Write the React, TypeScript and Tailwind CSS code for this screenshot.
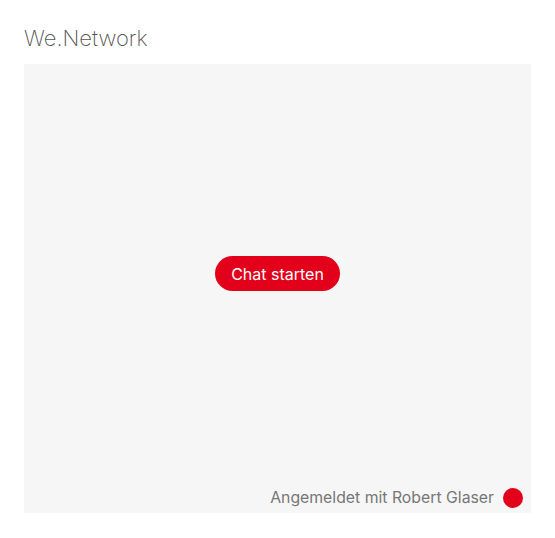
export default function App() {
  return (
    <div className="w-[555px] h-[538px] bg-white px-6 pt-[23px] pb-[25px] flex flex-col font-['Inter',sans-serif]">
      <h1 className="text-[22px] leading-[30px] font-extralight text-[#555555] mb-[11px]">We.Network</h1>
      <div className="flex-1 bg-[#f6f6f6] flex flex-col">
        <div className="flex-1 flex items-center justify-center">
          <button className="h-[35px] px-4 rounded-full bg-[#e2001a] text-white text-base">
            Chat starten
          </button>
        </div>
        <div className="h-[30px] flex items-center justify-end gap-[9px] pr-2">
          <span className="text-[15.8px] text-[#777777]">Angemeldet mit Robert Glaser</span>
          <span className="w-5 h-5 rounded-full bg-[#e2001a]" />
        </div>
      </div>
    </div>
  );
}
